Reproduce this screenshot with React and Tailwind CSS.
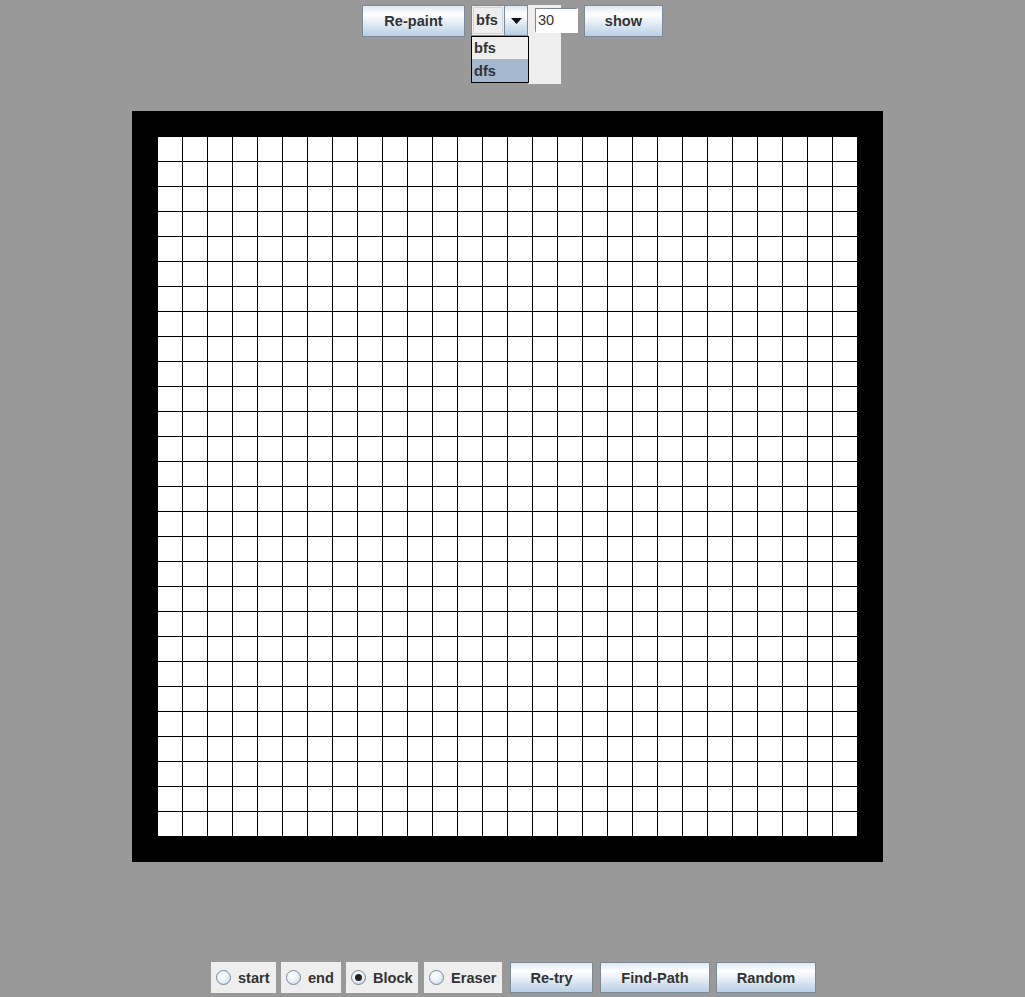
import React from "react";

const font = { fontFamily: '"Liberation Sans", Arial, sans-serif' };

function Btn({ label, w, h = "h-[32px]" }) {
  return (
    <div
      className={`${w} ${h} shrink-0 flex items-center justify-center pt-[2px] border border-[#7a8a99] bg-[linear-gradient(to_bottom,#dde8f3_0%,#ffffff_28%,#eaf1f8_50%,#b8cfe5_100%)] text-[14.6px] font-bold text-[#333333]`}
    >
      {label}
    </div>
  );
}

function Radio({ label, w, checked }) {
  return (
    <div className={`${w} h-[31px] shrink-0 flex items-center bg-[#eeeeee] pl-[5px] gap-[7px] text-[14.6px] font-bold text-[#333333]`}>
      <span className="w-[15px] h-[15px] shrink-0 rounded-full border border-[#7a8a99] bg-[radial-gradient(circle_at_40%_35%,#ffffff_0%,#eef3f9_45%,#b8cfe5_100%)] flex items-center justify-center">
        {checked && <span className="w-[7px] h-[7px] rounded-full bg-[#222222]" />}
      </span>
      <span className="leading-none pt-[2px]">{label}</span>
    </div>
  );
}

export default function App() {
  const cells = Array.from({ length: 28 * 28 });
  return (
    <div className="relative w-[1025px] h-[997px] bg-[#999999] flex flex-col overflow-hidden" style={font}>
      {/* light strip behind text field */}
      <div className="absolute left-[528px] top-[5px] w-[33px] h-[79px] bg-[#eeeeee]" />

      {/* top bar */}
      <div className="relative flex items-start pt-[5px] pl-[362px]">
        <Btn label="Re-paint" w="w-[103px]" />
        <div className="ml-[6px] w-[57px] h-[31px] shrink-0 flex border border-[#7a8a99] bg-[#eeeeee]">
          <div className="flex-1 m-[1px] border border-[#c9d6e3] flex items-center pl-[2px] pt-[1px] text-[14.6px] font-bold text-[#333333]">
            bfs
          </div>
          <div className="w-[23px] border-l border-[#7a8a99] bg-[linear-gradient(to_bottom,#dde8f3_0%,#ffffff_28%,#eaf1f8_50%,#b8cfe5_100%)] flex items-center justify-center">
            <svg width="11" height="6" viewBox="0 0 11 6">
              <path d="M0 0H11L5.5 6Z" fill="#111111" />
            </svg>
          </div>
        </div>
        <div className="ml-[7px] mt-[3px] w-[43px] h-[25px] shrink-0 bg-white border-t border-l border-[#7a8a99] border-r-2 border-b-2 border-r-white border-b-white flex items-center pl-[2px] pt-[1px] text-[14.6px] text-[#333333]">
          30
        </div>
        <div className="ml-[6px]">
          <Btn label="show" w="w-[79px]" />
        </div>
      </div>

      {/* dropdown popup */}
      <div className="absolute left-[471px] top-[36px] w-[58px] h-[47px] border border-black bg-[#eeeeee] flex flex-col text-[14.6px] font-bold text-[#333333]">
        <div className="h-[22px] flex items-center pl-[2px] pt-[2px]">bfs</div>
        <div className="h-[23px] flex items-center pl-[2px] pt-[2px] bg-[#a3b8cc]">dfs</div>
      </div>

      {/* board */}
      <div className="mt-[74px] ml-[132px] w-[751px] h-[751px] bg-black pl-[26px] pt-[26px] pr-[25px] pb-[25px]">
        <div className="w-[700px] h-[700px] grid grid-cols-[repeat(28,25px)] grid-rows-[repeat(28,25px)] bg-white">
          {cells.map((_, i) => (
            <div key={i} className="border-r border-b border-black" />
          ))}
        </div>
      </div>

      {/* bottom bar */}
      <div className="mt-[100px] flex items-start pl-[211px]">
        <Radio label="start" w="w-[65px]" />
        <div className="ml-[5px]"><Radio label="end" w="w-[60px]" /></div>
        <div className="ml-[5px]"><Radio label="Block" w="w-[72px]" checked /></div>
        <div className="ml-[6px]"><Radio label="Eraser" w="w-[78px]" /></div>
        <div className="ml-[8px]"><Btn label="Re-try" w="w-[83px]" h="h-[31px]" /></div>
        <div className="ml-[7px]"><Btn label="Find-Path" w="w-[110px]" h="h-[31px]" /></div>
        <div className="ml-[6px]"><Btn label="Random" w="w-[100px]" h="h-[31px]" /></div>
      </div>
    </div>
  );
}
